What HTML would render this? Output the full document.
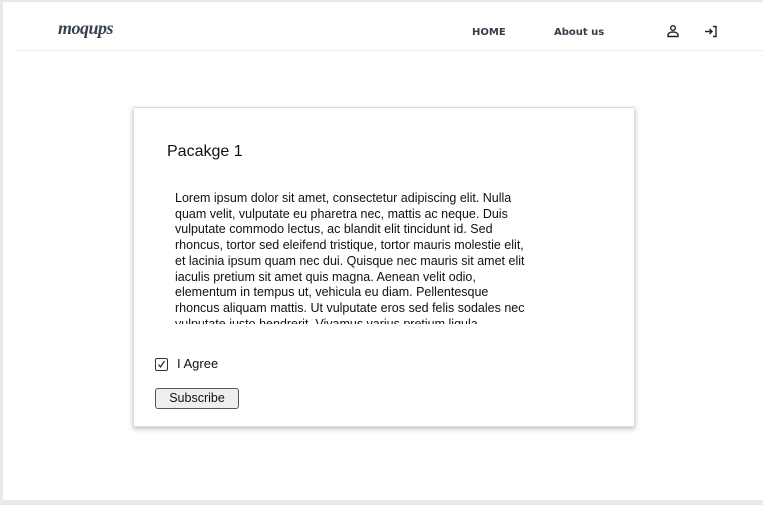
<!DOCTYPE html>
<html><head><style>
html,body{margin:0;padding:0;}
body{width:763px;height:505px;background:#e9e9ec;position:relative;overflow:hidden;font-family:"Liberation Sans",Arial,sans-serif;}
.page{position:absolute;left:3px;top:2px;width:760px;height:498px;background:#fff;}
.hdr{position:absolute;left:13px;top:0;width:747px;height:48px;border-bottom:1px solid #eceef1;}
.logo{position:absolute;left:42px;top:16px;font:italic bold 18px "Liberation Serif",serif;color:#3a4250;letter-spacing:-0.5px;}
.nav{position:absolute;top:25px;font:bold 10px "DejaVu Sans",sans-serif;color:#333c4a;}
.card{position:absolute;left:130px;top:105px;width:500px;height:318px;border:1px solid #ddd;box-shadow:0 2px 5px rgba(0,0,0,.25);background:#fff;}
h1{position:absolute;left:33px;top:35px;margin:0;font-weight:normal;font-size:16px;color:#111;}
.txt{position:absolute;left:41px;top:83px;width:356px;height:133px;overflow:hidden;font-size:12.5px;line-height:15.7px;color:#111;}
.cb{position:absolute;left:21px;top:250px;width:11px;height:11px;border:1px solid #333;border-radius:2px;}
.ag{position:absolute;left:43px;top:248px;font-size:13px;color:#111;}
.btn{position:absolute;left:21px;top:280px;width:82px;height:19px;border:1px solid #555;border-radius:3px;background:#eee;font-size:12.5px;text-align:center;line-height:19px;color:#111;}
</style></head><body>
<div class="page">
<div class="hdr">
<div class="logo">moqups</div>
<div class="nav" style="left:456px">HOME</div>
<div class="nav" style="left:538px;font-weight:bold">About us</div>
<svg style="position:absolute;left:650px;top:22px" width="14" height="14" viewBox="0 0 14 14" fill="none" stroke="#222" stroke-width="1.4"><circle cx="7" cy="4" r="2.3"/><path d="M2 12.5h10v-1.5c0-1.8-2.2-3-5-3s-5 1.2-5 3z"/></svg>
<svg style="position:absolute;left:688px;top:23px" width="14" height="13" viewBox="0 0 14 13" fill="none" stroke="#222" stroke-width="1.4"><path d="M1 6.5h7M5.5 4l2.5 2.5L5.5 9M9 1.5h3v10H9"/></svg>
</div>
<div class="card">
<h1>Pacakge 1</h1>
<div class="txt">Lorem ipsum dolor sit amet, consectetur adipiscing elit. Nulla quam velit, vulputate eu pharetra nec, mattis ac neque. Duis vulputate commodo lectus, ac blandit elit tincidunt id. Sed rhoncus, tortor sed eleifend tristique, tortor mauris molestie elit, et lacinia ipsum quam nec dui. Quisque nec mauris sit amet elit iaculis pretium sit amet quis magna. Aenean velit odio, elementum in tempus ut, vehicula eu diam. Pellentesque rhoncus aliquam mattis. Ut vulputate eros sed felis sodales nec vulputate justo hendrerit. Vivamus varius pretium ligula.</div>
<div class="cb"><svg width="11" height="11" viewBox="0 0 11 11" fill="none" stroke="#222" stroke-width="1.2" style="display:block"><path d="M2.5 5.5l2 2.5 4-6"/></svg></div>
<div class="ag">I Agree</div>
<div class="btn">Subscribe</div>
</div>
</div>
</body></html>
